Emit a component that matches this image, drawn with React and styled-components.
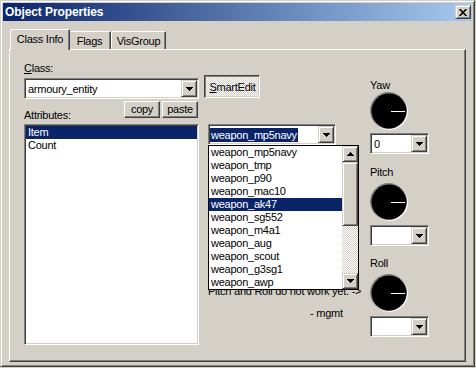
import { createGlobalStyle, styled } from 'styled-components';

const face = '#d4d0c8';
const light = '#ffffff';
const shadow = '#808080';
const dark = '#404040';
const selection = '#0a246a';

const raised = `
  border: 1px solid;
  border-color: ${light} ${dark} ${dark} ${light};
  box-shadow: inset -1px -1px ${shadow};
`;

const raisedSoft = `
  border: 1px solid;
  border-color: ${face} ${dark} ${dark} ${face};
  box-shadow: inset 1px 1px ${light}, inset -1px -1px ${shadow};
`;

const sunken = `
  border: 1px solid;
  border-color: ${shadow} ${light} ${light} ${shadow};
  box-shadow: inset 1px 1px ${dark}, inset -1px -1px ${face};
  padding: 1px;
`;

const dither = `
  background-color: ${face};
  background-image: conic-gradient(#fff 25%, transparent 0 50%, #fff 0 75%, transparent 0);
  background-size: 2px 2px;
`;

const GlobalStyle = createGlobalStyle`
  html, body {
    margin: 0;
    padding: 0;
    background: ${face};
  }

  body {
    font-family: "Liberation Sans", Arial, sans-serif;
    font-size: 11px;
    letter-spacing: -0.25px;
    color: #000;
  }

  * {
    box-sizing: border-box;
  }
`;

const Window = styled.div`
  width: 475px;
  height: 367px;
  padding: 2px;
  display: flex;
  flex-direction: column;
  background: ${face};
  border: 1px solid;
  border-color: ${face} ${dark} ${dark} ${face};
  box-shadow: inset 1px 1px ${light}, inset -1px -1px ${shadow};
`;

const TitleBar = styled.div`
  height: 18px;
  display: flex;
  align-items: center;
  justify-content: space-between;
  padding: 0 1px 0 2px;
  background: linear-gradient(90deg, #0a246a, #a6caf0);
`;

const Title = styled.span`
  color: #fff;
  font-weight: bold;
  font-size: 12px;
  letter-spacing: -0.1px;
`;

const CaptionButton = styled.div`
  width: 16px;
  height: 14px;
  display: flex;
  align-items: center;
  justify-content: center;
  background: ${face};
  ${raisedSoft}
`;

const Client = styled.div`
  flex: 1;
  padding: 8px 0 0 6px;
`;

const TabStrip = styled.div`
  display: flex;
  align-items: flex-end;
  margin-left: 1px;
`;

const Tab = styled.div`
  position: relative;
  z-index: ${(p) => (p.$active ? 1 : 0)};
  width: ${(p) => p.$width}px;
  height: ${(p) => (p.$active ? 21 : 18)}px;
  margin-bottom: ${(p) => (p.$active ? -1 : 0)}px;
  margin-right: ${(p) => (p.$active ? -2 : 0)}px;
  padding-top: 3px;
  text-align: center;
  line-height: 13px;
  white-space: nowrap;
  background: ${face};
  border-top: 1px solid ${light};
  border-left: 1px solid ${light};
  border-right: 1px solid ${dark};
  border-top-left-radius: 2px;
  border-top-right-radius: 1px;
  box-shadow: inset -1px 0 ${shadow};
`;

const Panel = styled.div`
  width: 457px;
  height: 313px;
  display: flex;
  padding: 12px 0 0 14px;
  border: 1px solid;
  border-color: ${light} ${dark} ${dark} ${light};
  box-shadow: inset -1px -1px ${shadow};
`;

const Column = styled.div`
  display: flex;
  flex-direction: column;
  width: ${(p) => p.$width}px;
  margin-left: ${(p) => p.$left || 0}px;
`;

const Label = styled.div`
  height: 13px;
  line-height: 13px;
  margin-top: ${(p) => p.$top || 0}px;
  white-space: nowrap;
`;

const ComboBox = styled.div`
  width: ${(p) => p.$width}px;
  height: 21px;
  margin-top: ${(p) => p.$top || 0}px;
  display: flex;
  background: #fff;
  ${sunken}
`;

const ComboText = styled.div`
  flex: 1;
  display: flex;
  align-items: center;
  padding-left: ${(p) => (p.$highlight ? 0 : 2)}px;
  overflow: hidden;
  white-space: nowrap;
`;

const Highlighted = styled.span`
  background: ${selection};
  color: #fff;
  line-height: 14px;
  padding: 0 1px;
`;

const DropButton = styled.div`
  width: 16px;
  display: flex;
  align-items: center;
  justify-content: center;
  background: ${face};
  ${raisedSoft}
`;

const AttributeHeader = styled.div`
  display: flex;
  margin-top: 2px;
`;

const ButtonGroup = styled.div`
  display: flex;
  gap: 2px;
  margin-left: auto;
  padding-right: 1px;
`;

const PushButton = styled.div`
  width: ${(p) => p.$width}px;
  height: 17px;
  line-height: 15px;
  text-align: center;
  background: ${face};
  ${raised}
`;

const ToggleButton = styled.div`
  align-self: flex-start;
  width: 56px;
  height: 23px;
  margin-top: 13px;
  padding: 1px 0 0 1px;
  display: flex;
  align-items: center;
  justify-content: center;
  ${dither}
  border: 1px solid;
  border-color: ${dark} ${light} ${light} ${dark};
  box-shadow: inset 1px 1px ${shadow}, inset -1px -1px ${face};
`;

const ListBox = styled.div`
  height: 221px;
  margin-top: 2px;
  background: #fff;
  ${sunken}
`;

const ListRow = styled.div`
  height: 13px;
  line-height: 13px;
  padding-left: 2px;
  white-space: nowrap;
  background: ${(p) => (p.$selected ? selection : 'transparent')};
  color: ${(p) => (p.$selected ? '#fff' : '#000')};
`;

const ValueField = styled.div`
  position: relative;
  width: 128px;
  margin: 26px 0 0 4px;
`;

const DropList = styled.div`
  position: absolute;
  top: 100%;
  left: 0;
  z-index: 2;
  width: 151px;
  height: 145px;
  display: flex;
  background: #fff;
  border: 1px solid #000;
`;

const DropItems = styled.div`
  flex: 1;
`;

const ScrollBar = styled.div`
  width: 16px;
  display: flex;
  flex-direction: column;
`;

const ScrollButton = styled.div`
  height: 16px;
  display: flex;
  align-items: center;
  justify-content: center;
  background: ${face};
  ${raisedSoft}
`;

const ScrollThumb = styled.div`
  height: 64px;
  background: ${face};
  ${raisedSoft}
`;

const ScrollTrack = styled.div`
  flex: 1;
  ${dither}
`;

const Note = styled.div`
  margin: ${(p) => p.$top}px 0 0 ${(p) => p.$left}px;
  height: 13px;
  line-height: 13px;
  white-space: nowrap;
`;

const DialBox = styled.div`
  width: 38px;
  height: 38px;
  margin-top: ${(p) => p.$top}px;

  svg {
    display: block;
  }
`;

const Arrow = ({ up }) => (
  <svg width="7" height="4" viewBox="0 0 7 4">
    <path
      d={
        up
          ? 'M3 0h1v1h1v1h1v1h1v1H0V3h1V2h1V1h1z'
          : 'M0 0h7v1H6v1H5v1H4v1H3V3H2V2H1V1H0z'
      }
      fill="#000"
    />
  </svg>
);

const Combo = ({ width, top, children, highlight }) => (
  <ComboBox $width={width} $top={top}>
    <ComboText $highlight={highlight}>{children}</ComboText>
    <DropButton>
      <Arrow />
    </DropButton>
  </ComboBox>
);

const Dial = ({ top }) => (
  <DialBox $top={top}>
    <svg width="38" height="38" viewBox="0 0 38 38">
      <circle cx="19.5" cy="19.5" r="18.5" fill="#fff" />
      <circle cx="18.5" cy="18.5" r="18.5" fill={shadow} />
      <circle cx="19" cy="19" r="17.5" fill="#000" />
      <path d="M21 19.5H35" stroke="#fff" />
    </svg>
  </DialBox>
);

const weapons = [
  'weapon_mp5navy',
  'weapon_tmp',
  'weapon_p90',
  'weapon_mac10',
  'weapon_ak47',
  'weapon_sg552',
  'weapon_m4a1',
  'weapon_aug',
  'weapon_scout',
  'weapon_g3sg1',
  'weapon_awp',
];

const angles = [
  { name: 'Yaw', labelTop: 17, dialTop: 0, comboTop: 3, value: '0' },
  { name: 'Pitch', labelTop: 12, dialTop: 4, comboTop: 4, value: '' },
  { name: 'Roll', labelTop: 11, dialTop: 4, comboTop: 4, value: '' },
];

const App = () => {
  return (
    <>
      <GlobalStyle />
      <Window>
        <TitleBar>
          <Title>Object Properties</Title>
          <CaptionButton>
            <svg width="8" height="7" viewBox="0 0 8 7">
              <path d="M0.6 0 L7.4 7 M7.4 0 L0.6 7" stroke="#000" strokeWidth="1.6" />
            </svg>
          </CaptionButton>
        </TitleBar>

        <Client>
          <TabStrip>
            <Tab $active $width={60}>
              Class Info
            </Tab>
            <Tab $width={43}>Flags</Tab>
            <Tab $width={55}>VisGroup</Tab>
          </TabStrip>

          <Panel>
            <Column $width={175}>
              <Label>
                <u>C</u>lass:
              </Label>
              <Combo width={175} top={3}>
                armoury_entity
              </Combo>
              <AttributeHeader>
                <Label $top={8}>Attributes:</Label>
                <ButtonGroup>
                  <PushButton $width={36}>copy</PushButton>
                  <PushButton $width={36}>paste</PushButton>
                </ButtonGroup>
              </AttributeHeader>
              <ListBox>
                <ListRow $selected>Item</ListRow>
                <ListRow>Count</ListRow>
              </ListBox>
            </Column>

            <Column $width={155} $left={5}>
              <ToggleButton>
                <span>
                  <u>S</u>martEdit
                </span>
              </ToggleButton>
              <ValueField>
                <Combo width={128} highlight>
                  <Highlighted>weapon_mp5navy</Highlighted>
                </Combo>
                <DropList>
                  <DropItems>
                    {weapons.map((w) => (
                      <ListRow key={w} $selected={w === 'weapon_ak47'}>
                        {w}
                      </ListRow>
                    ))}
                  </DropItems>
                  <ScrollBar>
                    <ScrollButton>
                      <Arrow up />
                    </ScrollButton>
                    <ScrollThumb />
                    <ScrollTrack />
                    <ScrollButton>
                      <Arrow />
                    </ScrollButton>
                  </ScrollBar>
                </DropList>
              </ValueField>
              <Note $top={140} $left={4}>
                Pitch and Roll do not work yet. -&gt;
              </Note>
              <Note $top={9} $left={106}>
                - mgmt
              </Note>
            </Column>

            <Column $width={59} $left={11}>
              {angles.map((a) => (
                <div key={a.name}>
                  <Label $top={a.labelTop}>{a.name}</Label>
                  <Dial top={a.dialTop} />
                  <Combo width={59} top={a.comboTop}>
                    {a.value}
                  </Combo>
                </div>
              ))}
            </Column>
          </Panel>
        </Client>
      </Window>
    </>
  );
};

export default App;
